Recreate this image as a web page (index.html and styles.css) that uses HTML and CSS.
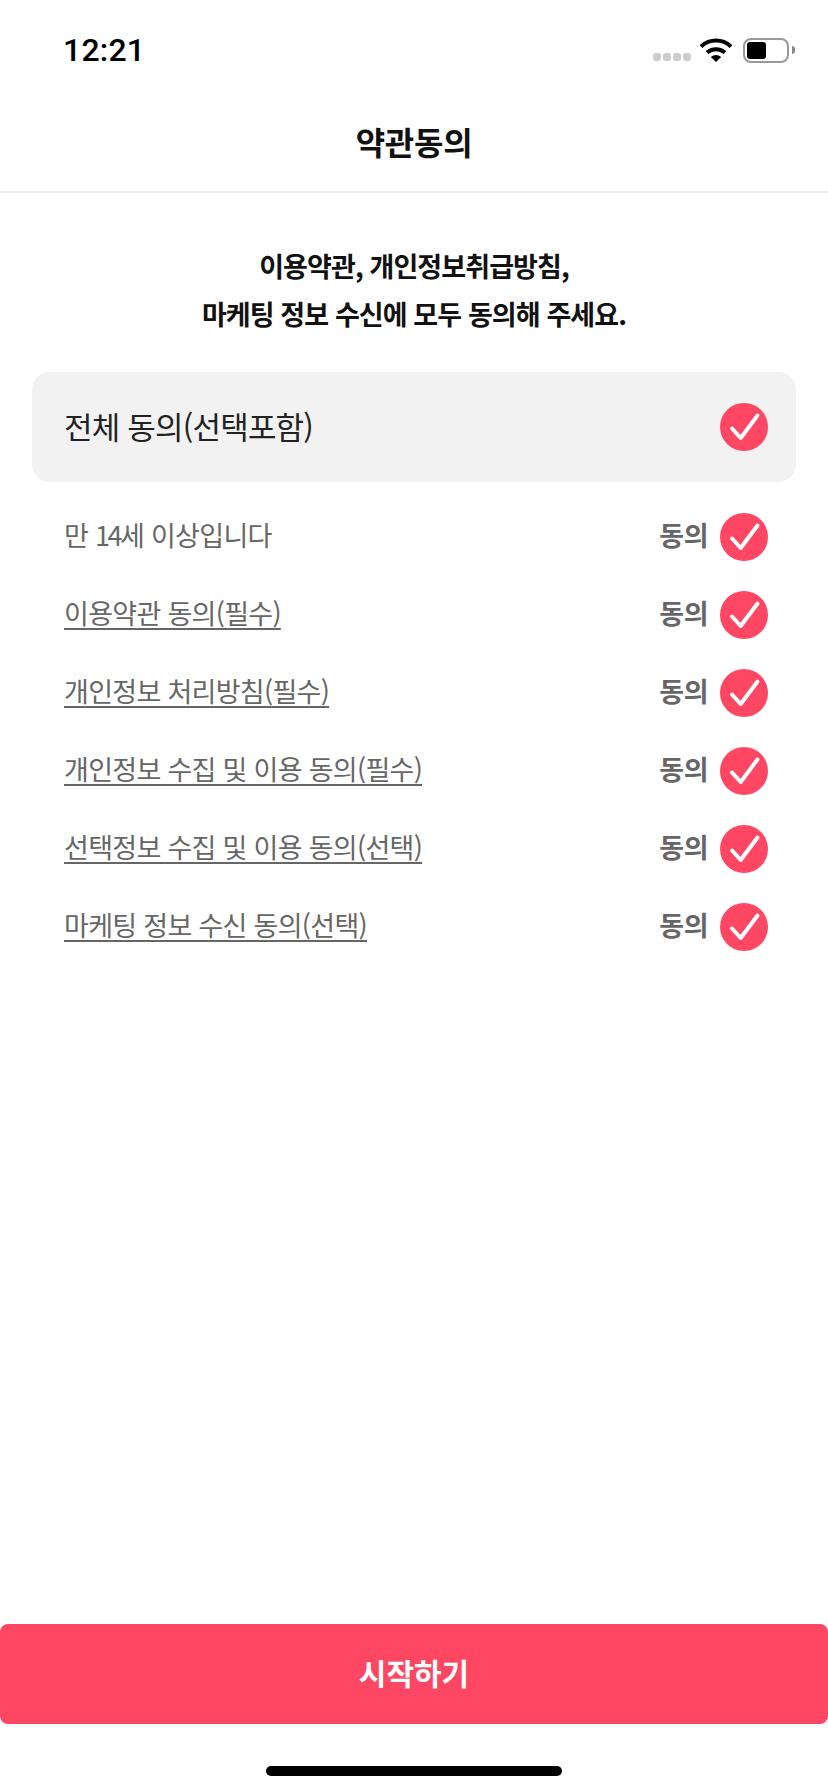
FILE: index.html
```html
<!DOCTYPE html>
<html lang="ko">
<head>
    <meta charset="UTF-8">
    <meta name="viewport" content="width=device-width, initial-scale=1.0">
    <title>약관동의</title>
    <link rel="stylesheet" href="styles.css">
</head>
<body>
    <svg class="defs" width="0" height="0">
        <symbol id="check" viewBox="0 0 48 48">
            <circle cx="24" cy="24" r="24" fill="#ff4763"/>
            <path d="M12 25.5 L20.7 35 L37.5 12.5" fill="none" stroke="#fff" stroke-width="4" stroke-linecap="round" stroke-linejoin="round"/>
        </symbol>
    </svg>

    <div class="page">
        <div class="status-bar">
            <span class="time">12:21</span>
            <div class="status-icons">
                <div class="signal"><i></i><i></i><i></i><i></i></div>
                <svg class="wifi" width="32" height="24" viewBox="0 0 32 24">
                    <path d="M1 8.5 C9.5 0.5 22.5 0.5 31 8.5" fill="none" stroke="#000" stroke-width="4"/>
                    <path d="M7 14.5 C12 10 20 10 25 14.5" fill="none" stroke="#000" stroke-width="4"/>
                    <path d="M10.8 19 L16 24 L21.2 19 C18 16.2 14 16.2 10.8 19 Z" fill="#000"/>
                </svg>
                <div class="battery"><div class="battery-level"></div></div>
                <div class="battery-nub"></div>
            </div>
        </div>

        <header class="nav">약관동의</header>

        <p class="intro">이용약관, 개인정보취급방침,<br>마케팅 정보 수신에 모두 동의해 주세요.</p>

        <div class="agree-all">
            <span class="agree-all-label">전체 동의(선택포함)</span>
            <svg class="check"><use href="#check"/></svg>
        </div>

        <ul class="terms">
            <li class="term">
                <span class="term-label">만 <span class="digits">14</span>세 이상입니다</span>
                <span class="term-agree">동의</span>
                <svg class="check"><use href="#check"/></svg>
            </li>
            <li class="term">
                <span class="term-label"><a class="link">이용약관 동의(필수)</a></span>
                <span class="term-agree">동의</span>
                <svg class="check"><use href="#check"/></svg>
            </li>
            <li class="term">
                <span class="term-label"><a class="link">개인정보 처리방침(필수)</a></span>
                <span class="term-agree">동의</span>
                <svg class="check"><use href="#check"/></svg>
            </li>
            <li class="term">
                <span class="term-label"><a class="link">개인정보 수집 및 이용 동의(필수)</a></span>
                <span class="term-agree">동의</span>
                <svg class="check"><use href="#check"/></svg>
            </li>
            <li class="term">
                <span class="term-label"><a class="link">선택정보 수집 및 이용 동의(선택)</a></span>
                <span class="term-agree">동의</span>
                <svg class="check"><use href="#check"/></svg>
            </li>
            <li class="term">
                <span class="term-label"><a class="link">마케팅 정보 수신 동의(선택)</a></span>
                <span class="term-agree">동의</span>
                <svg class="check"><use href="#check"/></svg>
            </li>
        </ul>

        <button class="start">시작하기</button>

        <div class="home-bar"><div class="home-indicator"></div></div>
    </div>
</body>
</html>
```

FILE: styles.css
```css
* {
    box-sizing: border-box;
}
body {
    margin: 0;
    background: #fff;
    font-family: "Noto Sans CJK KR", "Noto Sans", sans-serif;
    color: #111;
}
.defs {
    display: block;
    height: 0;
}
.page {
    width: 828px;
    height: 1792px;
    display: flex;
    flex-direction: column;
    overflow: hidden;
}
.status-bar {
    height: 100px;
    padding: 0 33px 0 63px;
    display: flex;
    align-items: center;
    justify-content: space-between;
}
.time {
    font-family: Roboto, sans-serif;
    font-size: 32px;
    font-weight: 500;
    line-height: 1;
    letter-spacing: 0.2px;
    color: #000;
}
.status-icons {
    display: flex;
    align-items: center;
}
.signal {
    display: flex;
    gap: 2px;
    margin: 14px 9px 0 0;
}
.signal i {
    width: 8px;
    height: 8px;
    border-radius: 3px;
    background: #ccc;
}
.wifi {
    margin-right: 11px;
}
.battery {
    width: 46px;
    height: 25px;
    padding: 2px;
    border: 2px solid #999;
    border-radius: 8px;
}
.battery-level {
    width: 19px;
    height: 17px;
    border-radius: 3px;
    background: #000;
}
.battery-nub {
    width: 3px;
    height: 8px;
    margin-left: 3px;
    border-radius: 0 3px 3px 0;
    background: #888;
}
.nav {
    height: 93px;
    border-bottom: 2px solid #ebebeb;
    display: flex;
    align-items: center;
    justify-content: center;
    padding-bottom: 10px;
    font-size: 32px;
    font-weight: 700;
    letter-spacing: -0.3px;
}
.intro {
    margin: 49px 0 34px;
    text-align: center;
    font-size: 27px;
    font-weight: 700;
    line-height: 48px;
    letter-spacing: -0.9px;
}
.agree-all {
    height: 110px;
    margin: 0 32px;
    padding: 0 28px 0 32px;
    display: flex;
    align-items: center;
    justify-content: space-between;
    border-radius: 18px;
    background: #f2f2f2;
    font-size: 31px;
    letter-spacing: -0.8px;
    color: #222;
}
.agree-all-label {
    padding-bottom: 4px;
}
.check {
    width: 48px;
    height: 48px;
    flex: none;
}
.terms {
    list-style: none;
    margin: 31px 0 0;
    padding: 0 60px 0 64px;
    display: flex;
    flex-direction: column;
    gap: 30px;
}
.term {
    height: 48px;
    display: flex;
    align-items: center;
    color: #666;
    font-size: 27px;
    letter-spacing: -0.7px;
}
.term-label {
    flex: 1;
    padding-bottom: 6px;
}
.digits {
    letter-spacing: -2.5px;
}
.link {
    text-decoration: underline;
    text-underline-offset: 4px;
}
.term-agree {
    margin-right: 12px;
    padding-bottom: 6px;
    font-weight: 700;
    letter-spacing: -0.5px;
}
.start {
    margin-top: auto;
    height: 100px;
    flex: none;
    padding-bottom: 6px;
    border: none;
    border-radius: 8px;
    background: #ff4763;
    color: #fff;
    font-family: inherit;
    font-size: 30px;
    font-weight: 700;
}
.home-bar {
    height: 68px;
    flex: none;
    padding-top: 42px;
    display: flex;
    justify-content: center;
}
.home-indicator {
    width: 296px;
    height: 10px;
    border-radius: 5px;
    background: #000;
}
```
